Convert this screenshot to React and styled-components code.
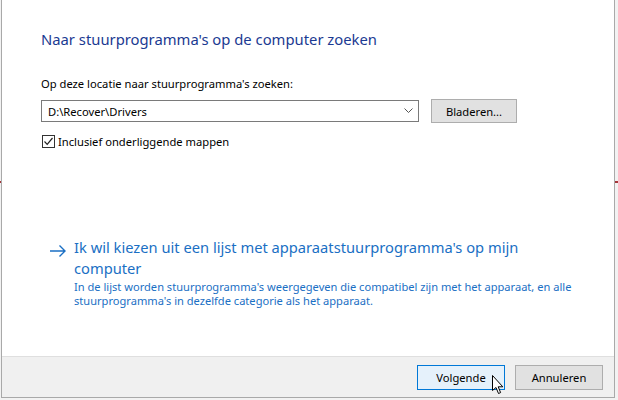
import React from "react";
import styled, { createGlobalStyle } from "styled-components";

const Global = createGlobalStyle`
  html, body { margin: 0; padding: 0; }
  body {
    width: 618px; height: 400px; overflow: hidden;
    font-family: "Noto Sans", "Open Sans", sans-serif;
    background: #f4f4f4;
  }
`;

const Page = styled.div`
  position: relative;
  width: 618px;
  height: 400px;
  background:
    linear-gradient(#a4373a, #a4373a) 0 181px / 618px 2px no-repeat,
    #f2f2f2;
  padding-left: 1px;
  box-sizing: border-box;
`;

const Window = styled.div`
  width: 614px;
  height: 398px;
  box-sizing: border-box;
  border: 1px solid #a9a9a9;
  border-top: none;
  background: #fff;
  display: flex;
  flex-direction: column;
`;

const Content = styled.div`
  flex: 1;
  padding: 28px 0 0 39px;
  display: flex;
  flex-direction: column;
`;

const Title = styled.h1`
  margin: 0;
  font-size: 14.8px;
  font-weight: 400;
  color: #1b3a92;
  line-height: 22px;
`;

const Label = styled.div`
  margin-top: 26px;
  font-size: 11.2px;
  color: #000;
  line-height: 15px;
`;

const Row = styled.div`
  display: flex;
  align-items: center;
  gap: 12px;
  margin-top: 8px;
`;

const Combo = styled.div`
  width: 378px;
  height: 22px;
  box-sizing: border-box;
  border: 1px solid #7a7a7a;
  display: flex;
  align-items: center;
  justify-content: space-between;
  padding: 0 5px 0 6px;
  font-size: 11.2px;
  color: #000;
`;

const Button = styled.div`
  width: ${(p) => p.$w || 86}px;
  height: ${(p) => p.$h || 24}px;
  box-sizing: border-box;
  border: 1px solid ${(p) => (p.$primary ? "#0078d7" : "#adadad")};
  background: ${(p) => (p.$primary ? "#e5f1fb" : "#e1e1e1")};
  display: flex;
  align-items: center;
  justify-content: center;
  font-size: 11.2px;
  color: #000;
`;

const CheckRow = styled.div`
  display: flex;
  align-items: center;
  gap: 3px;
  margin-top: 11px;
  margin-left: 1px;
  font-size: 11.2px;
  color: #000;
`;

const Box = styled.div`
  width: 13px;
  height: 13px;
  box-sizing: border-box;
  border: 1px solid #333;
  display: flex;
  align-items: center;
  justify-content: center;
`;

const LinkBlock = styled.div`
  margin-top: 88px;
  margin-left: 9px;
  display: flex;
  gap: 8px;
`;

const ArrowWrap = styled.div`
  padding-top: 3px;
`;

const LinkText = styled.div`
  display: flex;
  flex-direction: column;
`;

const LinkTitle = styled.div`
  font-size: 14.7px;
  line-height: 21px;
  color: #1a6fc4;
  width: 470px;
`;

const LinkDesc = styled.div`
  font-size: 11.1px;
  line-height: 14px;
  color: #1a6fc4;
  width: 520px;
  margin-top: 1px;
`;

const Footer = styled.div`
  height: 41px;
  box-sizing: border-box;
  background: #f0f0f0;
  border-top: 1px solid #dfdfdf;
  display: flex;
  justify-content: flex-end;
  align-items: center;
  gap: 10px;
  padding-right: 11px;
  position: relative;
`;

const Cursor = styled.svg`
  position: absolute;
  left: 490px;
  top: 18px;
`;

export default function App() {
  return (
    <>
      <Global />
      <Page>
        <Window>
          <Content>
            <Title>Naar stuurprogramma's op de computer zoeken</Title>
            <Label>Op deze locatie naar stuurprogramma's zoeken:</Label>
            <Row>
              <Combo>
                <span>D:\Recover\Drivers</span>
                <svg width="9" height="6" viewBox="0 0 9 6">
                  <path d="M0.5 0.5 L4.5 4.5 L8.5 0.5" fill="none" stroke="#555" strokeWidth="1" />
                </svg>
              </Combo>
              <Button $w={86} $h={24}>Bladeren...</Button>
            </Row>
            <CheckRow>
              <Box>
                <svg width="11" height="11" viewBox="0 0 11 11">
                  <path d="M1.5 5.5 L4.2 8.3 L9.5 2" fill="none" stroke="#222" strokeWidth="1.2" />
                </svg>
              </Box>
              <span>Inclusief onderliggende mappen</span>
            </CheckRow>
            <LinkBlock>
              <ArrowWrap>
                <svg width="16" height="12" viewBox="0 0 16 12">
                  <path d="M0 6 H15 M9.5 0.5 L15 6 L9.5 11.5" fill="none" stroke="#1a6fc4" strokeWidth="1.4" />
                </svg>
              </ArrowWrap>
              <LinkText>
                <LinkTitle>Ik wil kiezen uit een lijst met apparaatstuurprogramma's op mijn computer</LinkTitle>
                <LinkDesc>
                  In de lijst worden stuurprogramma's weergegeven die compatibel zijn met het apparaat, en alle
                  stuurprogramma's in dezelfde categorie als het apparaat.
                </LinkDesc>
              </LinkText>
            </LinkBlock>
          </Content>
          <Footer>
            <Button $primary $w={88} $h={25}>Volgende</Button>
            <Button $w={88} $h={25}>Annuleren</Button>
            <Cursor width="13" height="20" viewBox="0 0 13 20">
              <path d="M0.5 0.5 V15.5 L4 12.5 L6.5 18.5 L8.6 17.6 L6.2 11.8 H10.8 Z" fill="#fff" stroke="#000" strokeWidth="1" strokeLinejoin="round" />
            </Cursor>
          </Footer>
        </Window>
      </Page>
    </>
  );
}
